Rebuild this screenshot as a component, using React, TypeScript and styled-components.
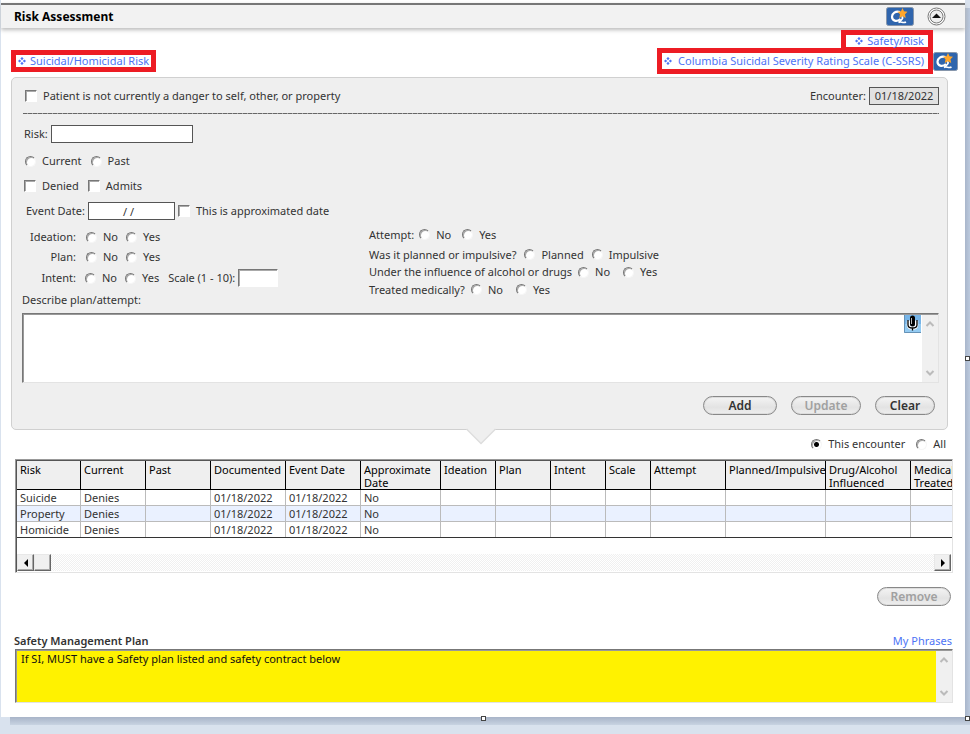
import React from "react";
import styled, { createGlobalStyle, css } from "styled-components";

const font = '"Noto Sans", "Open Sans", sans-serif';

const GlobalStyle = createGlobalStyle`
  *, *::before, *::after { box-sizing: border-box; }
  body {
    margin: 0;
    background: #d9e2ee;
    color: #333;
    font: 11px/14px ${font};
  }
  input, button, textarea { font: inherit; color: inherit; margin: 0; border-radius: 0; }
`;

/* ---------- window frame ---------- */

const Desktop = styled.div`
  position: relative;
  padding: 0 5px 18px 1px;
  background: linear-gradient(to right, #a9b6cb, #bccade) no-repeat right 8px / 5px;
  background-size: 5px calc(100% - 24px);
`;

const Window = styled.main`
  display: flex;
  flex-direction: column;
  min-height: 716px;
  background: #fff;
`;

const BottomShadow = styled.div`
  height: 8px;
  margin: 0 -5px -8px 9px;
  background: linear-gradient(#a8b4c8, #c8d3e2);
`;

const Handle = styled.span<{ $top: number; $middle?: boolean }>`
  position: absolute;
  top: ${(p) => p.$top}px;
  ${(p) => (p.$middle ? "left: calc(50% - 4px);" : "right: 0;")}
  width: 5px;
  height: 5px;
  border: 1px solid #444;
  background: #fff;
`;

const TitleBar = styled.header`
  display: flex;
  align-items: center;
  height: 25px;
  margin-top: 3px;
  padding: 0 19px 0 13px;
  gap: 13px;
  background: #f2f2f2;
  border-top: 2px solid #777;
  box-shadow: 0 2px 4px #bbb;
`;

const Title = styled.h1`
  flex: 1;
  margin: 0;
  color: #000;
  font-size: 12px;
  line-height: 16px;
  font-weight: 700;
`;

const IconButton = styled.button`
  display: flex;
  flex: none;
  padding: 0;
  border: 0;
  background: none;
`;

/* ---------- links ---------- */

const LinkArea = styled.nav`
  display: flex;
  justify-content: space-between;
  align-items: flex-end;
  height: 46px;
  padding: 0 7px 0 10px;
`;

const LinkStack = styled.div`
  display: flex;
  flex-direction: column;
  align-items: flex-end;
`;

const LinkRow = styled.div<{ $end?: boolean }>`
  display: flex;
  align-items: center;
  margin-top: ${(p) => (p.$end ? "-4px" : "0")};
  padding-right: ${(p) => (p.$end ? "0" : "25px")};
`;

const MarkedLink = styled.a<{ $tall?: boolean; $left?: number; $right?: number }>`
  display: flex;
  align-items: center;
  gap: ${(p) => (p.$tall ? 6 : 4)}px;
  height: ${(p) => (p.$tall ? 26 : 22)}px;
  padding: 0 ${(p) => p.$right ?? 2}px 0 ${(p) => p.$left ?? 2}px;
  border: 5px solid #ed1c24;
  color: #4d73f5;
  text-decoration: none;
  white-space: nowrap;
`;

const LeftLink = styled.div`
  margin-bottom: 2px;
`;

/* ---------- form panel ---------- */

const Panel = styled.form`
  position: relative;
  margin: 3px 17px 0 10px;
  padding: 8px 8px 14px 10px;
  background: #efefef;
  border: 1px solid #d0d0d0;
  border-radius: 5px;
`;

const PanelArrow = styled.svg`
  position: absolute;
  left: calc(50% - 14px);
  bottom: -16px;
`;

const Row = styled.div<{ $height: number; $indent?: number; $gap?: number }>`
  display: flex;
  align-items: center;
  height: ${(p) => p.$height}px;
  padding-left: ${(p) => p.$indent ?? 0}px;
  gap: ${(p) => p.$gap ?? 3}px;
  white-space: nowrap;
`;

const Spacer = styled.span`
  flex: 1;
`;

const Divider = styled.hr`
  height: 1px;
  margin: 8px 0 2px 1px;
  border: 0;
  background: repeating-linear-gradient(to right, #666 0 4px, #aaa 4px 5px);
`;

const Columns = styled.div`
  display: grid;
  grid-template-columns: 347px 1fr;
  padding: 3px 0 6px;
`;

const Caption = styled.span<{ $width?: number }>`
  ${(p) => p.$width && css`width: ${p.$width}px; text-align: right;`}
`;

const ChoiceLabel = styled.label<{ $gap?: number }>`
  display: inline-flex;
  align-items: center;
  gap: ${(p) => p.$gap ?? 6}px;
`;

const sunken = css`
  border: 1px solid;
  border-color: #777 #fff #fff #777;
  box-shadow: inset 1px 1px 0 #aaa;
`;

const Tick = styled.input.attrs({ type: "checkbox" })`
  appearance: none;
  width: 12px;
  height: 12px;
  background: #fff;
  ${sunken}
`;

const Dot = styled.input.attrs({ type: "radio" })`
  appearance: none;
  width: 11px;
  height: 11px;
  background: #fff;
  border: 1px solid;
  border-color: #777 #f6f6f6 #f6f6f6 #777;
  border-radius: 50%;
  box-shadow: inset 1px 1px 0 #aaa;
  &:checked { background: radial-gradient(circle, #000 2px, #fff 3px); }
`;

const Field = styled.input<{ $width: number; $filled?: boolean; $sunken?: boolean }>`
  width: ${(p) => p.$width}px;
  height: 18px;
  padding: 0 4px;
  text-align: center;
  border: 1px solid #555;
  background: ${(p) => (p.$filled ? "#e1e1e1" : "#fff")};
  ${(p) => p.$sunken && sunken}
`;

const NoteBox = styled.div<{ $yellow?: boolean; $height: number }>`
  display: flex;
  height: ${(p) => p.$height}px;
  background: ${(p) => (p.$yellow ? "#fff200" : "#fff")};
  border: 1px solid;
  border-color: #777 #e3e3e3 #e3e3e3 #777;
  box-shadow: inset 1px 1px 0 #999;
`;

const NoteText = styled.textarea`
  flex: 1;
  padding: 2px 5px;
  border: 0;
  outline: 0;
  resize: none;
  background: transparent;
  color: #111;
`;

const VerticalBar = styled.div`
  display: flex;
  flex-direction: column;
  justify-content: space-between;
  width: 16px;
  margin-top: 1px;
  padding: 5px 3px;
  background: #f0f0f0;
`;

const MicHolder = styled.div`
  padding: 1px 1px 0 0;
`;

const Actions = styled.div`
  display: flex;
  justify-content: flex-end;
  gap: 14px;
  padding: 13px 4px 0 0;
`;

const PillButton = styled.button<{ $width: number }>`
  width: ${(p) => p.$width}px;
  height: 19px;
  padding: 0;
  border: 1px solid #888;
  border-radius: 10px;
  background: linear-gradient(#f4f4f4, #e3e3e3 60%, #eee);
  box-shadow: inset 0 0 0 1px #ddd;
  color: #333;
  font-size: 12px;
  line-height: 16px;
  font-weight: 600;
  &:disabled { color: #a0a0a0; }
`;

/* ---------- history table ---------- */

const FilterRow = styled.div`
  display: flex;
  justify-content: flex-end;
  gap: 11px;
  margin-top: 7px;
  padding-right: 19px;
`;

const GridBox = styled.section`
  margin: 8px 12px 0 14px;
  border: 1px solid;
  border-color: #999 #e3e3e3 #e3e3e3 #999;
  box-shadow: inset 1px 1px 0 #555;
  padding: 1px;
  overflow: hidden;
`;

const Table = styled.table`
  width: 979px;
  margin-bottom: 16px;
  border-collapse: separate;
  border-spacing: 0;
  table-layout: fixed;
  border-bottom: 1px solid #333;
`;

const HeadCell = styled.th`
  height: 28px;
  padding: 2px 0 0 3px;
  vertical-align: top;
  text-align: left;
  font-weight: 400;
  line-height: 13px;
  color: #000;
  background: #efefef;
  border-right: 1px solid #000;
  border-bottom: 1px solid #000;
`;

const BodyRow = styled.tr`
  &:nth-child(even) { background: #eaf1ff; }
  &:last-child td { border-bottom: 0; height: 15px; }
`;

const Cell = styled.td`
  height: 16px;
  padding: 0 0 0 3px;
  line-height: 14px;
  border-right: 1px solid #bbb;
  border-bottom: 1px solid #bbb;
`;

const HorizontalBar = styled.div`
  display: flex;
  height: 17px;
  background: repeating-conic-gradient(#fff 0 25%, #f0f0f0 0 50%) 0 0 / 2px 2px;
`;

const barPart = css`
  display: flex;
  align-items: center;
  justify-content: center;
  width: 17px;
  padding: 0;
  background: #f0f0f0;
  border: 1px solid;
  border-color: #e8e8e8 #666 #666 #e8e8e8;
  box-shadow: inset -1px -1px 0 #aaa;
`;

const BarButton = styled.button`
  ${barPart}
`;

const BarThumb = styled.span`
  ${barPart}
`;

const RemoveRow = styled.div`
  display: flex;
  justify-content: flex-end;
  padding: 14px 14px 0 0;
`;

/* ---------- plan ---------- */

const PlanSection = styled.section`
  margin-top: 28px;
  padding: 0 12px 14px 14px;
`;

const PlanHead = styled.div`
  display: flex;
  justify-content: space-between;
  margin-left: -1px;
  height: 15px;
  padding-right: 1px;
`;

const PlanTitle = styled.label`
  font-weight: 600;
`;

const PlainLink = styled.a`
  color: #4d73f5;
  text-decoration: none;
`;

/* ---------- drawings ---------- */

const Diamonds = () => (
  <svg width="8" height="8" viewBox="0 0 8 8" fill="#4d73f5" aria-hidden="true">
    <path d="M4 0 5.6 1.6 4 3.2 2.4 1.6ZM4 4.8 5.6 6.4 4 8 2.4 6.4ZM1.6 2.4 3.2 4 1.6 5.6 0 4ZM6.4 2.4 8 4 6.4 5.6 4.8 4Z" />
  </svg>
);

const Badge = ({ width = 28 }: { width?: number }) => (
  <svg width={width} height="19" viewBox={`${(28 - width) / 2} 0 ${width} 19`} aria-hidden="true">
    <rect x={(28 - width) / 2 + 0.5} y="0.5" width={width - 1} height="18" rx="2" fill="#2f65ad" stroke="#8796ab" />
    <path d="M14 5C9.500 3.500 6 6.500 6 9.700 6 13.500 10.500 15.500 14.500 12" fill="none" stroke="#fff" strokeWidth="2.200" />
    <path d="M15.500 9.500C18 10.500 16 13 12.500 15.400 15 13.900 17 16.700 20 15" fill="none" stroke="#fff" strokeWidth="1.700" />
    <path d="M16.500 1 18 4.300 21.500 4.700 19 7.200 19.700 11 16.500 9.200 13.300 11 14 7.200 11.500 4.700 15 4.300Z" fill="#ffa62b" />
  </svg>
);

const Collapse = () => (
  <svg width="19" height="19" viewBox="0 0 19 19" aria-hidden="true">
    <circle cx="9.500" cy="9.500" r="8.500" fill="#fff" stroke="#777" />
    <circle cx="9.500" cy="9.500" r="6.500" fill="#eee" stroke="#777" />
    <path d="M5 11 9.500 6.500 14 11Z" fill="#111" />
  </svg>
);

const Microphone = () => (
  <svg width="17" height="18" viewBox="0 0 17 18" aria-hidden="true">
    <rect width="17" height="18" fill="#77b5e8" />
    <rect y="9" width="17" height="9" fill="#94cbf2" />
    <path d="M.5 0V17.500H17" fill="none" stroke="#6692b6" />
    <path d="M4.500 5.500V10Q4.500 13 8.500 13T12.500 10V5.500M8.500 12V14.500" fill="none" stroke="#fff" strokeWidth="3.500" />
    <path d="M4 5V10Q4 13 8.500 13T13 10V5M8.500 13V15.500" fill="none" stroke="#000" strokeWidth="1.300" />
    <rect x="6" y="0.500" width="5" height="11" rx="2.500" fill="#000" />
    <path d="M7.500 3V9" stroke="#bbb" />
  </svg>
);

const Chevron = ({ down }: { down?: boolean }) => (
  <svg width="10" height="8" viewBox="0 0 10 8" fill="none" stroke="#bbb" strokeWidth="2" aria-hidden="true">
    <path d={down ? "M1.500 2 5 5.500 8.500 2" : "M1.500 6 5 2.500 8.500 6"} />
  </svg>
);

const Triangle = ({ right }: { right?: boolean }) => (
  <svg width="6" height="8" viewBox="0 0 6 8" aria-hidden="true">
    <path d={right ? "M1 0V8L5 4Z" : "M5 0V8L1 4Z"} />
  </svg>
);

/* ---------- composed parts ---------- */

const Radio = ({ name, text, checked }: { name: string; text: string; checked?: boolean }) => (
  <ChoiceLabel>
    <Dot name={name} defaultChecked={checked} />
    {text}
  </ChoiceLabel>
);

const RadioSet = ({ name, options, gap, label }: { name: string; label: string; options: string[]; gap: number }) => (
  <Row as="span" role="radiogroup" aria-label={label} $height={16} $gap={gap}>
    {options.map((o) => (
      <Radio key={o} name={name} text={o} />
    ))}
  </Row>
);

const Scroller = () => (
  <VerticalBar>
    <IconButton type="button" aria-label="Scroll up"><Chevron /></IconButton>
    <IconButton type="button" aria-label="Scroll down"><Chevron down /></IconButton>
  </VerticalBar>
);

const columns: [string, number][] = [
  ["Risk", 64], ["Current", 65], ["Past", 65], ["Documented", 75], ["Event Date", 75],
  ["Approximate Date", 80], ["Ideation", 55], ["Plan", 55], ["Intent", 55], ["Scale", 45],
  ["Attempt", 75], ["Planned/Impulsive", 100], ["Drug/Alcohol Influenced", 85], ["Medically Treated", 85],
];

const Col = styled.col<{ $width: number }>`
  width: ${(p) => p.$width}px;
`;

const rows = ["Suicide", "Property", "Homicide"].map((risk) => [
  risk, "Denies", "", "01/18/2022", "01/18/2022", "No", "", "", "", "", "", "", "", "",
]);

export default function App() {
  return (
    <>
      <GlobalStyle />
      <Desktop>
        <Window>
          <TitleBar>
            <Title>Risk Assessment</Title>
            <IconButton aria-label="Quality measures"><Badge /></IconButton>
            <IconButton aria-label="Collapse"><Collapse /></IconButton>
          </TitleBar>

          <LinkArea>
            <LeftLink>
              <MarkedLink href="#suicidal"><Diamonds />Suicidal/Homicidal Risk</MarkedLink>
            </LeftLink>
            <LinkStack>
              <LinkRow>
                <MarkedLink href="#safety" $left={9} $right={4}><Diamonds />Safety/Risk</MarkedLink>
              </LinkRow>
              <LinkRow $end>
                <MarkedLink href="#cssrs" $tall $left={2} $right={4}>
                  <Diamonds />Columbia Suicidal Severity Rating Scale (C-SSRS)
                </MarkedLink>
                <IconButton aria-label="Rating scale measures"><Badge width={25} /></IconButton>
              </LinkRow>
            </LinkStack>
          </LinkArea>

          <Panel>
            <Row $height={19} $indent={3}>
              <ChoiceLabel><Tick />Patient is not currently a danger to self, other, or property</ChoiceLabel>
              <Spacer />
              <label htmlFor="encounter">Encounter:</label>
              <Field id="encounter" $width={70} $filled defaultValue="01/18/2022" />
            </Row>
            <Divider />
            <Row $height={36} $indent={2}>
              <label htmlFor="risk">Risk:</label>
              <Field id="risk" $width={142} />
            </Row>
            <Row $height={18} $indent={3}>
              <RadioSet label="Time" name="time" options={["Current", "Past"]} gap={9} />
            </Row>
            <Row $height={32} $indent={2} $gap={9}>
              <ChoiceLabel><Tick />Denied</ChoiceLabel>
              <ChoiceLabel><Tick />Admits</ChoiceLabel>
            </Row>
            <Row $height={18} $indent={4}>
              <label htmlFor="date">Event Date:</label>
              <Field id="date" $width={87} defaultValue="/ /  " />
              <ChoiceLabel><Tick />This is approximated date</ChoiceLabel>
            </Row>
            <Columns>
              <div>
                <Row $height={28} $gap={10}>
                  <Caption $width={54}>Ideation:</Caption>
                  <RadioSet label="Ideation" name="ideation" options={["No", "Yes"]} gap={8} />
                </Row>
                <Row $height={12} $gap={10}>
                  <Caption $width={54}>Plan:</Caption>
                  <RadioSet label="Plan" name="plan" options={["No", "Yes"]} gap={8} />
                </Row>
                <Row $height={30} $gap={9}>
                  <Caption $width={54}>Intent:</Caption>
                  <RadioSet label="Intent" name="intent" options={["No", "Yes"]} gap={8} />
                  <ChoiceLabel $gap={3}>Scale (1 - 10):<Field $width={40} $sunken /></ChoiceLabel>
                </Row>
                <Row $height={14}><label htmlFor="describe">Describe plan/attempt:</label></Row>
              </div>
              <div>
                <Row $height={23} $gap={5}>
                  <Caption>Attempt:</Caption>
                  <RadioSet label="Attempt" name="attempt" options={["No", "Yes"]} gap={11} />
                </Row>
                <Row $height={17} $gap={8}>
                  <Caption>Was it planned or impulsive?</Caption>
                  <RadioSet label="Planned or impulsive" name="planned" options={["Planned", "Impulsive"]} gap={8} />
                </Row>
                <Row $height={18} $gap={6}>
                  <Caption>Under the influence of alcohol or drugs</Caption>
                  <RadioSet label="Under the influence" name="influence" options={["No", "Yes"]} gap={13} />
                </Row>
                <Row $height={17} $gap={6}>
                  <Caption>Treated medically?</Caption>
                  <RadioSet label="Treated medically" name="treated" options={["No", "Yes"]} gap={13} />
                </Row>
              </div>
            </Columns>
            <NoteBox $height={70}>
              <NoteText id="describe" />
              <MicHolder>
                <IconButton type="button" aria-label="Dictate"><Microphone /></IconButton>
              </MicHolder>
              <Scroller />
            </NoteBox>
            <Actions>
              <PillButton type="button" $width={74}>Add</PillButton>
              <PillButton type="button" $width={70} disabled>Update</PillButton>
              <PillButton type="button" $width={60}>Clear</PillButton>
            </Actions>
            <PanelArrow width="30" height="17" viewBox="0 0 30 17" aria-hidden="true">
              <path d="M0 0H30L15 15Z" fill="#efefef" />
              <path d="M.5 1 15 15.500 29.500 1" fill="none" stroke="#ddd" strokeWidth="1.500" />
            </PanelArrow>
          </Panel>

          <FilterRow role="radiogroup" aria-label="Shown encounters">
            <Radio name="shown" text="This encounter" checked />
            <Radio name="shown" text="All" />
          </FilterRow>

          <GridBox>
            <Table>
              <colgroup>
                {columns.map(([name, width]) => <Col key={name} $width={width} />)}
              </colgroup>
              <thead>
                <tr>{columns.map(([name]) => <HeadCell key={name}>{name}</HeadCell>)}</tr>
              </thead>
              <tbody>
                {rows.map((row) => (
                  <BodyRow key={row[0]}>{row.map((value, i) => <Cell key={i}>{value}</Cell>)}</BodyRow>
                ))}
              </tbody>
            </Table>
            <HorizontalBar>
              <BarButton aria-label="Scroll left"><Triangle /></BarButton>
              <BarThumb />
              <Spacer />
              <BarButton aria-label="Scroll right"><Triangle right /></BarButton>
            </HorizontalBar>
          </GridBox>

          <RemoveRow><PillButton $width={74} disabled>Remove</PillButton></RemoveRow>

          <PlanSection>
            <PlanHead>
              <PlanTitle htmlFor="plan-text">Safety Management Plan</PlanTitle>
              <PlainLink href="#phrases">My Phrases</PlainLink>
            </PlanHead>
            <NoteBox $height={54} $yellow>
              <NoteText id="plan-text" spellCheck={false} defaultValue="If SI, MUST have a Safety plan listed and safety contract below" />
              <Scroller />
            </NoteBox>
          </PlanSection>
        </Window>
        <BottomShadow />
        <Handle $top={356} />
        <Handle $top={716} />
        <Handle $top={716} $middle />
      </Desktop>
    </>
  );
}
